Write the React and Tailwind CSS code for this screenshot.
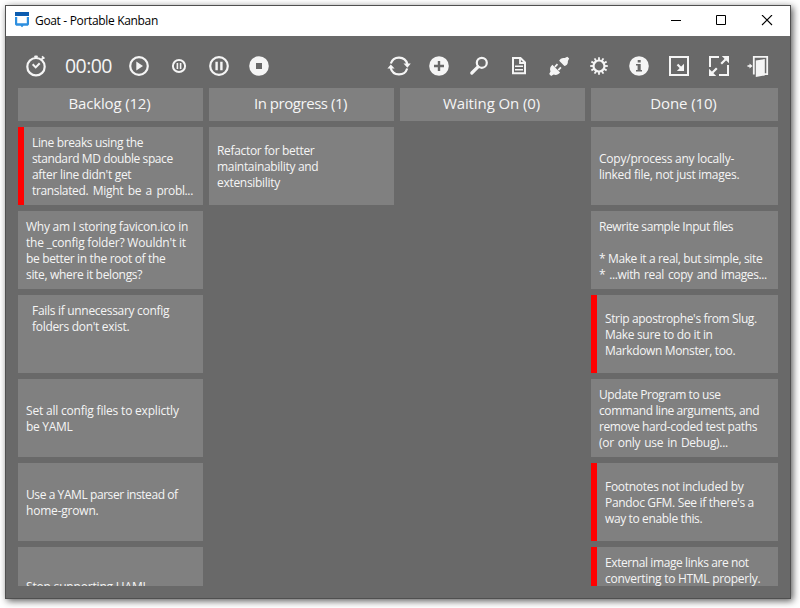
import React from "react";

const columns = [
  {
    title: "Backlog (12)",
    width: "w-[185px]",
    tracking: "tracking-[-0.15px]",
    cards: [
      {
        red: true,
        lines: [
          ["Line breaks using the", "tracking-[-0.36px]"],
          ["standard MD double space", "tracking-[-0.4px]"],
          ["after line didn't get", "tracking-[-0.3px]"],
          ["translated. Might be a probl...", "tracking-[-0.35px] [word-spacing:1.8px]"],
        ],
      },
      {
        lines: [
          ["Why am I storing favicon.ico in", "tracking-[-0.25px]"],
          ["the _config folder? Wouldn't it", "tracking-[-0.2px]"],
          ["be better in the root of the", "tracking-[-0.35px]"],
          ["site, where it belongs?", "tracking-[-0.33px]"],
        ],
      },
      {
        top: true,
        indent: true,
        lines: [
          ["Fails if unnecessary config", "tracking-[-0.3px]"],
          ["folders don't exist.", "tracking-[-0.3px]"],
        ],
      },
      {
        lines: [
          ["Set all config files to explictly", "tracking-[-0.2px]"],
          ["be YAML", "tracking-[-0.3px]"],
        ],
      },
      {
        lines: [
          ["Use a YAML parser instead of", "tracking-[-0.42px]"],
          ["home-grown.", "tracking-[-0.2px]"],
        ],
      },
      { lines: [["Stop supporting HAML", "tracking-[-0.18px]"]] },
    ],
  },
  {
    title: "In progress (1)",
    width: "w-[185px]",
    tracking: "tracking-[-0.45px]",
    cards: [
      {
        lines: [
          ["Refactor for better", "tracking-[-0.33px]"],
          ["maintainability and", "tracking-[-0.32px]"],
          ["extensibility", "tracking-[-0.3px]"],
        ],
      },
    ],
  },
  { title: "Waiting On (0)", width: "w-[185px]", tracking: "tracking-[-0.1px]", cards: [] },
  {
    title: "Done (10)",
    width: "w-[187px]",
    tracking: "tracking-[-0.12px]",
    cards: [
      {
        lines: [
          ["Copy/process any locally-", "tracking-[-0.23px]"],
          ["linked file, not just images.", "tracking-[-0.28px]"],
        ],
      },
      {
        lines: [
          ["Rewrite sample Input files", "tracking-[-0.4px]"],
          ["\u00a0", ""],
          ["* Make it a real, but simple, site", "tracking-[-0.38px]"],
          ["* ...with real copy and images...", "tracking-[-0.38px] [word-spacing:1.3px]"],
        ],
      },
      {
        red: true,
        lines: [
          ["Strip apostrophe's from Slug.", "tracking-[-0.37px]"],
          ["Make sure to do it in", "tracking-[-0.33px]"],
          ["Markdown Monster, too.", "tracking-[-0.36px]"],
        ],
      },
      {
        lines: [
          ["Update Program to use", "tracking-[-0.42px]"],
          ["command line arguments, and", "tracking-[-0.41px]"],
          ["remove hard-coded test paths", "tracking-[-0.39px]"],
          ["(or only use in Debug)...", "tracking-[-0.3px] [word-spacing:1.2px]"],
        ],
      },
      {
        red: true,
        lines: [
          ["Footnotes not included by", "tracking-[-0.29px]"],
          ["Pandoc GFM. See if there's a", "tracking-[-0.33px]"],
          ["way to enable this.", "tracking-[-0.37px]"],
        ],
      },
      {
        red: true,
        top: true,
        lines: [
          ["External image links are not", "tracking-[-0.41px]"],
          ["converting to HTML properly.", "tracking-[-0.28px]"],
        ],
      },
    ],
  },
];

function Card({ card }) {
  return (
    <div
      className={
        "flex h-[78px] shrink-0 flex-col bg-[#808080] " +
        (card.top ? "justify-start pt-2 " : "justify-center pt-px ") +
        (card.red ? "border-l-[6px] border-[#ff0000] pl-2" : card.indent ? "pl-3.5" : "pl-2")
      }
    >
      {card.lines.map(([text, spacing]) => (
        <div key={text} className={"h-4 text-[12px] leading-4 whitespace-pre " + spacing}>
          {text}
        </div>
      ))}
    </div>
  );
}

function Tool({ children }) {
  return (
    <div className="flex w-10 justify-center">
      <svg width="24" height="24" viewBox="0 0 24 24" fill="none" stroke="#f5f5f5" strokeWidth="2">
        {children}
      </svg>
    </div>
  );
}

const teeth = [0, 30, 60, 90, 120, 150, 180, 210, 240, 270, 300, 330];

function Toolbar() {
  return (
    <div className="flex h-[52px] items-center pt-2 pl-2.5">
      <Tool>
        <circle cx="12" cy="12.7" r="8.7" strokeWidth="2.2" />
        <path d="M12 4V1.4M10.2 2.6h3.6M17.5 5.5l2-2.2M18 2.4l2.4 2.2" strokeWidth="1.8" />
        <path d="M8.7 10.2l3 3.2 4-4.2" />
      </Tool>
      <div className="w-[63px] pl-[9px] text-[19.5px] leading-6 tracking-[-0.55px]">00:00</div>
      <Tool>
        <circle cx="12" cy="12" r="8.8" strokeWidth="2.2" />
        <path d="M9.3 7.5v9l6.7-4.5z" fill="#f5f5f5" stroke="none" />
      </Tool>
      <Tool>
        <circle cx="12" cy="12" r="6.1" />
        <path d="M10.4 9v6M13.6 9v6" strokeWidth="1.6" />
      </Tool>
      <Tool>
        <circle cx="12" cy="12" r="8.8" strokeWidth="2.2" />
        <path d="M9.6 7.8v8.4M14.4 7.8v8.4" strokeWidth="2.4" />
      </Tool>
      <Tool>
        <circle cx="12" cy="12" r="9.8" fill="#f5f5f5" stroke="none" />
        <path d="M9 9h6v6H9z" fill="#696969" stroke="none" />
      </Tool>
      <div className="w-[100px]" />
      <Tool>
        <path d="M3.8 9.5A8.6 8.6 0 0 1 20.3 10M20.2 14.5A8.6 8.6 0 0 1 3.7 14" strokeWidth="2.2" />
        <path d="M16.5 9.5h7.3L20.4 13.8zM.4 14.6h7.2L3.8 10.4z" fill="#f5f5f5" stroke="none" />
      </Tool>
      <Tool>
        <circle cx="12" cy="12" r="9.8" fill="#f5f5f5" stroke="none" />
        <path d="M12 7v10M7 12h10" stroke="#696969" strokeWidth="2.4" />
      </Tool>
      <Tool>
        <circle cx="14.8" cy="8.8" r="5" strokeWidth="2.2" />
        <path d="M11 12.8l-6.2 6.2" strokeWidth="3.2" strokeLinecap="round" />
      </Tool>
      <Tool>
        <path d="M6 4h7.5L18 8.5V19.3H6z" />
        <path d="M13 4v5h5" strokeWidth="1.8" />
        <path d="M8 12.2h8M8 15.7h8" strokeWidth="1.6" />
      </Tool>
      <Tool>
        <path d="M12.2 6.7l5.2 5.4c2.2-.5 3.8-2.4 3.5-5.2l1.3-2.3-1.9-1.9-2.5 1.4c-2.6-.6-4.8.7-5.6 2.6z" fill="#f5f5f5" stroke="none" />
        <path d="M5.4 10.8l7.7 7.8c-1.8 2.3-4.2 2.8-6.4 2l-2.6 1.3-1.9-1.9 1.3-2.6c-1-2.4-.3-4.9 1.9-6.6z" fill="#f5f5f5" stroke="none" />
        <path d="M7.9 12.8l2.6-2.7M11.3 16.1l2.6-2.7" strokeWidth="1.8" />
      </Tool>
      <Tool>
        <circle cx="12" cy="12" r="5.5" strokeWidth="2.2" />
        {teeth.map((angle) => (
          <path key={angle} d="M12 6V3.2" transform={`rotate(${angle} 12 12)`} strokeWidth="1.8" />
        ))}
      </Tool>
      <Tool>
        <circle cx="12" cy="12" r="9.8" fill="#f5f5f5" stroke="none" />
        <path d="M10.7 6h3v2.6h-3zM9 10h4.7v6H15v1.6H9V16h1.6v-4.4H9z" fill="#696969" stroke="none" />
      </Tool>
      <Tool>
        <path d="M3 3h18v18H3z" />
        <path d="M10.5 10.5l4 4" strokeWidth="2.2" />
        <path d="M17 9.8V17H9.8z" fill="#f5f5f5" stroke="none" />
      </Tool>
      <Tool>
        <path d="M12 3H3v10M12 21h9V11" />
        <path d="M14.8 2H22v7.2zM2 14.8V22h7.2z" fill="#f5f5f5" stroke="none" />
        <path d="M14.2 9.8l4.5-4.5M5.3 18.7l4.5-4.5" strokeWidth="2.2" />
      </Tool>
      <Tool>
        <path d="M6.8 20.5V2.8h13.4v17.4H17" strokeWidth="1.8" />
        <path d="M8.8 6.6l9-1.6v16.4l-9 1.6zM2.5 9.4L5.6 12l-3.1 2.6z" fill="#f5f5f5" stroke="none" />
        <path d="M.5 12H4" strokeWidth="1.6" />
      </Tool>
    </div>
  );
}

function TitleBar() {
  return (
    <div className="flex h-[30px] items-center bg-white pl-[9px] text-black">
      <svg className="mb-0.5" width="14" height="16" viewBox="0 0 14 16">
        <path d="M0 0h14v4H0z" fill="#0b5cb0" />
        <path d="M0 5h2.2v6.2h9.6V5H14v7.6L12.8 13.8H8.5L7 15.2 5.5 13.8H1.2L0 12.6z" fill="#2e8fdf" />
      </svg>
      <span className="pl-1.5 text-[12px] leading-4 tracking-[-0.33px]">Goat - Portable Kanban</span>
      <svg className="mr-[17px] ml-auto" width="102" height="12" viewBox="0 0 102 12" fill="none" stroke="#000">
        <path d="M0 5.5h10M45.5.5h9v9h-9z" />
        <path d="M91 0l10 10M101 0l-10 10" strokeWidth="1.1" />
      </svg>
    </div>
  );
}

export default function App() {
  return (
    <div className="h-[608px] w-[800px] overflow-hidden bg-white pt-[5px] pl-[5px] font-['Open_Sans','Noto_Sans',sans-serif] text-[#f5f5f5]">
      <div className="flex h-[594px] w-[786px] flex-col border border-[#505050] bg-[#696969] shadow-[2px_2px_7px_rgba(0,0,0,0.65)]">
        <TitleBar />
        <Toolbar />
        <div className="flex h-[498px] gap-1.5 overflow-hidden pl-3">
          {columns.map((column) => (
            <div key={column.title} className={"flex flex-col gap-1.5 overflow-hidden " + column.width}>
              <div
                className={
                  "flex h-[33px] shrink-0 items-center justify-center bg-[#808080] pr-0.5 pb-[3px] text-[15px] leading-5 " +
                  column.tracking
                }
              >
                {column.title}
              </div>
              {column.cards.map((card) => (
                <Card key={card.lines[0][0]} card={card} />
              ))}
            </div>
          ))}
        </div>
      </div>
    </div>
  );
}
